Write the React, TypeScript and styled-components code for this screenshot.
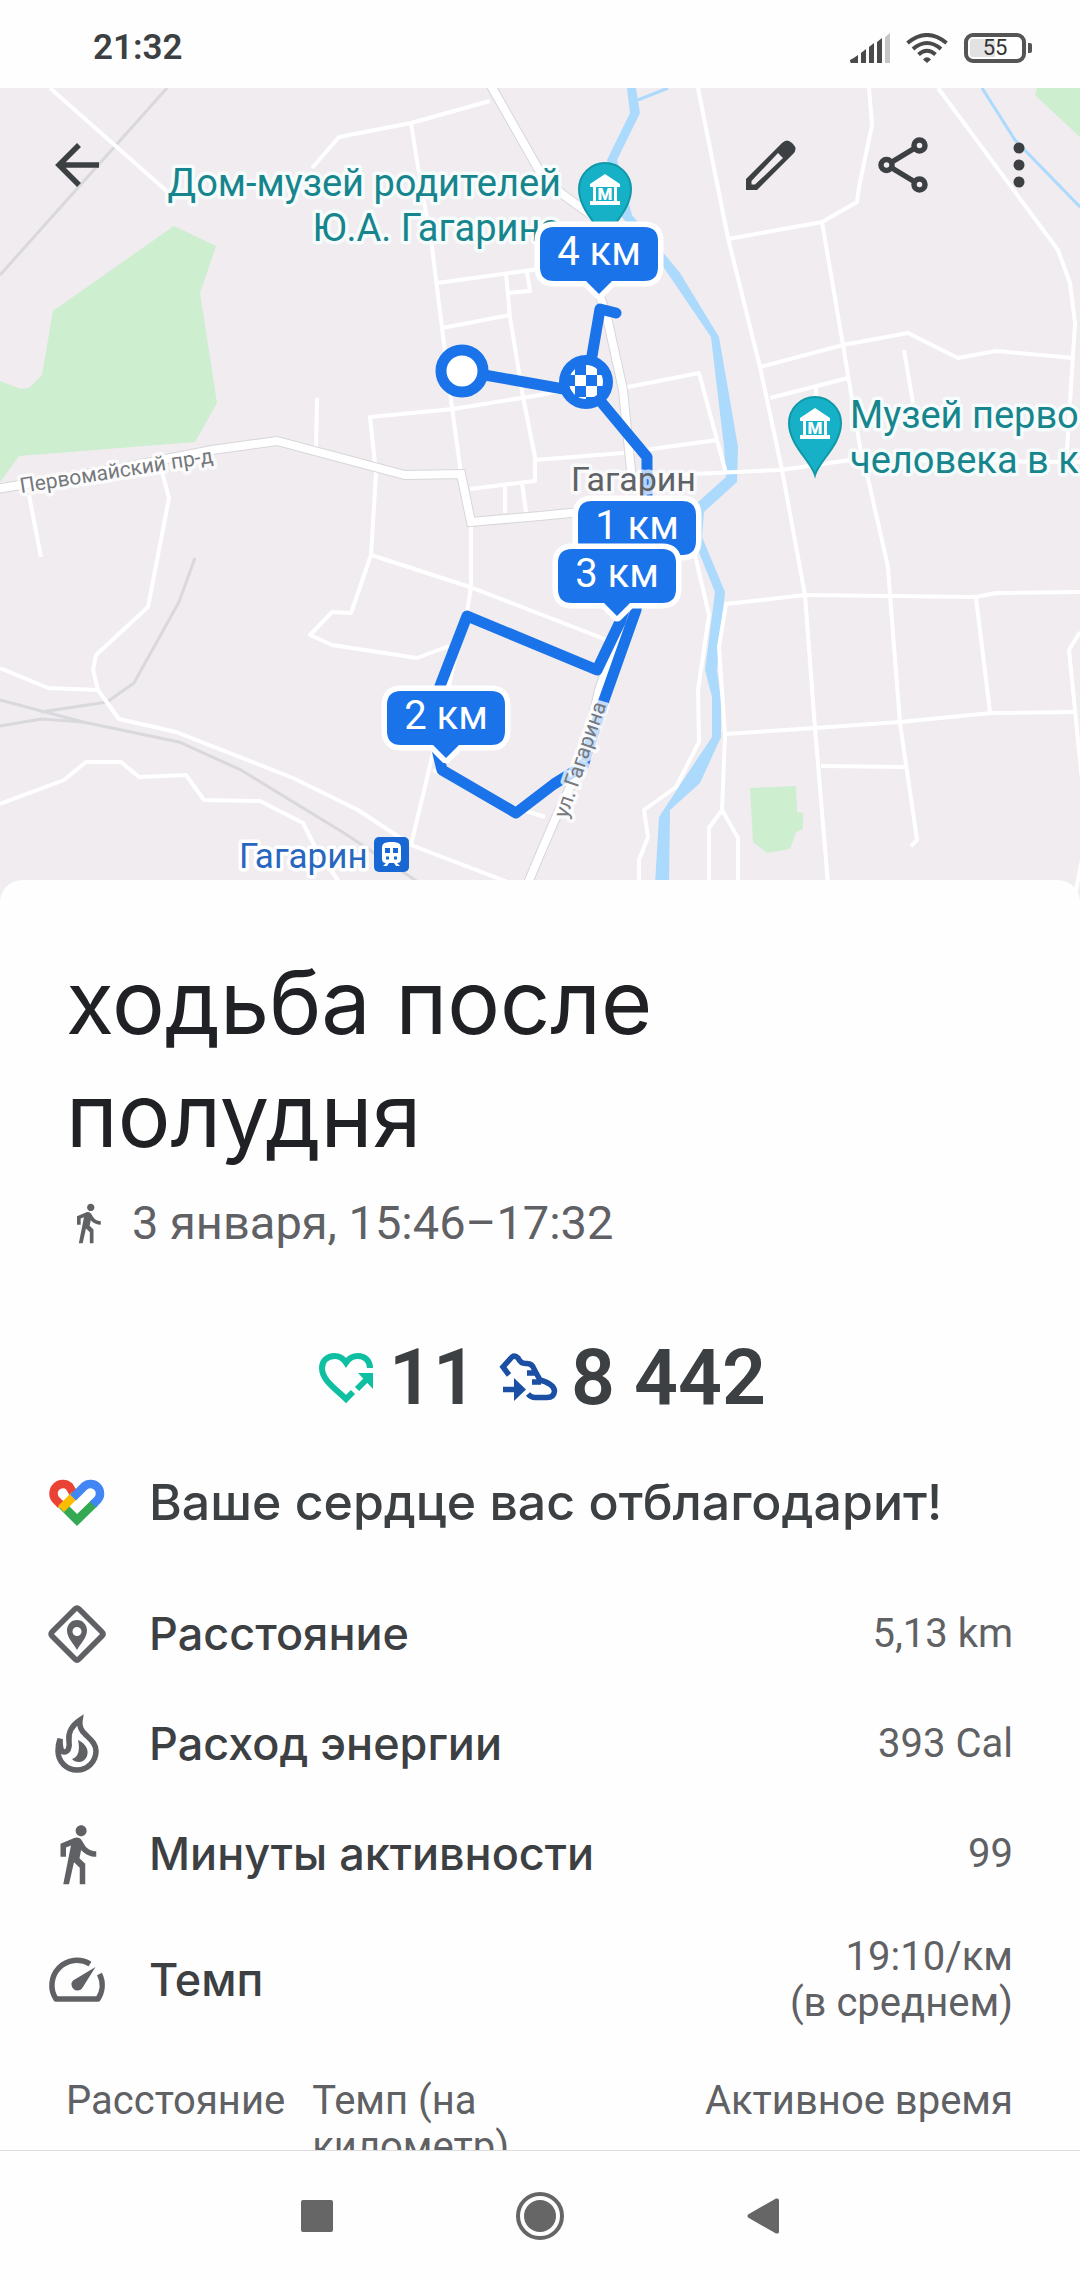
import React from "react";
import styled, { createGlobalStyle, css } from "styled-components";

const GlobalStyle = createGlobalStyle`
  *, *::before, *::after { box-sizing: border-box; }
  body { margin: 0; background: #fefefe; font-family: Roboto, "Noto Sans", sans-serif; }
`;

const display = css`
  font-family: Inter, "Noto Sans", sans-serif;
`;

const Screen = styled.div`
  display: flex;
  flex-direction: column;
  height: 100vh;
  background: #fefefe;
  color: #3c4043;
`;

/* ---------- status bar ---------- */

const StatusBar = styled.header`
  flex: none;
  display: flex;
  align-items: center;
  justify-content: space-between;
  height: 88px;
  padding: 8px 48px 0 93px;
`;

const Clock = styled.time`
  font-size: 35px;
  line-height: 40px;
  font-weight: 600;
`;

const StatusIcons = styled.div`
  display: flex;
  align-items: center;
  gap: 16px;
  color: #4a4a4a;
`;

const Battery = styled.span`
  position: relative;
  display: flex;
  align-items: center;
  justify-content: center;
  width: 62px;
  height: 30px;
  margin-right: 6px;
  border: 4px solid #555;
  border-radius: 9px;
  background: linear-gradient(90deg, #e2e2e2 50%, #fefefe 50%);
  box-shadow: inset 0 0 0 2px #fefefe;
  font-size: 22px;
  line-height: 22px;
  color: #333;

  &::after {
    content: "";
    position: absolute;
    right: -10px;
    top: 6px;
    width: 4px;
    height: 10px;
    border-radius: 0 2px 2px 0;
    background: #555;
  }
`;

/* ---------- map ---------- */

const Content = styled.main`
  flex: 1;
  min-height: 0;
  overflow-y: auto;
  scrollbar-width: none;
`;

const MapArea = styled.section`
  position: relative;
  height: 820px;
  background: #f0ecf0;
`;

const MapCanvas = styled.svg`
  display: block;
  width: 100%;
  height: 100%;
`;

const Toolbar = styled.div`
  position: absolute;
  inset: 0 0 auto 0;
  display: flex;
  align-items: center;
  height: 154px;
  padding: 0 28px 0 44px;
`;

const IconButton = styled.button<{ $end?: number }>`
  display: flex;
  align-items: center;
  justify-content: center;
  width: 66px;
  height: 66px;
  margin-right: ${(p) => p.$end ?? 0}px;
  padding: 0;
  border: 0;
  background: none;
  color: #3c4043;
`;

const Spacer = styled.span`
  flex: 1;
`;

/* ---------- details ---------- */

const Sheet = styled.section`
  position: relative;
  margin-top: -28px;
  padding: 66px 67px 0 66px;
  border-radius: 22px 22px 0 0;
  background: #fefefe;
`;

const Title = styled.h1`
  ${display}
  max-width: 700px;
  margin: 0;
  font-size: 88px;
  line-height: 113px;
  font-weight: 400;
  color: #202124;
`;

const When = styled.p`
  display: flex;
  align-items: center;
  gap: 22px;
  margin: 21px 0 0;
  font-size: 47px;
  line-height: 60px;
  color: #5f6164;
`;

const Totals = styled.div`
  display: flex;
  align-items: center;
  justify-content: center;
  gap: 21px;
  margin-top: 78px;
  padding-left: 5px;
`;

const Total = styled.span`
  display: flex;
  align-items: center;
  gap: 13px;
  font-size: 77px;
  line-height: 94px;
  font-weight: 600;
`;

const Facts = styled.ul`
  margin: 0 0 27px -22px;
  padding: 0;
  list-style: none;
`;

const Fact = styled.li<{ $tall?: number }>`
  display: flex;
  align-items: center;
  gap: 39px;
  height: ${(p) => p.$tall ?? 110}px;
`;

const FactName = styled.span<{ $lead?: boolean }>`
  ${display}
  flex: 1;
  font-size: ${(p) => (p.$lead ? 50 : 45)}px;
  line-height: 60px;
  font-weight: 500;
`;

const FactValue = styled.span`
  font-size: 40px;
  line-height: 46px;
  text-align: right;
  white-space: pre-line;
  color: #5f6164;
`;

const Splits = styled.table`
  width: 100%;
  border-collapse: collapse;
  font-size: 40px;
  line-height: 46px;
  color: #5f6164;
`;

const SplitHead = styled.th<{ $w?: string; $right?: boolean }>`
  width: ${(p) => p.$w ?? "auto"};
  padding: 0;
  font-weight: 400;
  text-align: ${(p) => (p.$right ? "right" : "left")};
  vertical-align: top;
`;

const SplitLabel = styled.span`
  display: block;
  max-width: 220px;
`;

/* ---------- system navigation ---------- */

const NavBar = styled.nav`
  flex: none;
  display: flex;
  align-items: center;
  justify-content: center;
  gap: 157px;
  height: 130px;
  border-top: 1px solid #dedede;
`;

const NavButton = styled(IconButton)`
  color: #666;
`;

const halo = { paintOrder: "stroke", strokeLinejoin: "round" } as const;

const thinRoads = [
  "50,88 170,194",
  "490,101 411,123 339,137 312,168",
  "411,123 418,167 432,247 442,328 451,400 461,474",
  "437,283 540,269",
  "506,273 510,317 523,397 535,457 535,481 470,489",
  "527,272 530,291 508,293",
  "442,328 510,315",
  "376,473 370,417 453,409 540,395 575,388",
  "376,473 371,555 351,613 332,612 310,635 332,645 417,658 449,646",
  "317,398 316,450",
  "371,555 470,587 540,614 607,640",
  "471,523 471,587 467,612",
  "505,485 505,513",
  "522,483 526,512",
  "535,460 623,453 717,440",
  "29,495 41,557",
  "160,455 162,472 169,498 148,607 96,655 93,670 98,690 119,719 176,732 293,778 358,810 411,845 510,883",
  "0,668 48,688 98,690",
  "0,804 64,780 86,762 121,762 139,777 186,775 204,800 260,801 303,823 315,847 339,882",
  "455,660 433,753 411,845",
  "433,770 516,808 545,817",
  "698,88 728,238 760,367 782,470 805,595 815,728 828,884",
  "869,88 872,125 859,187 857,202 822,222 728,239",
  "822,222 843,345 860,447 869,483 888,567 890,595 900,723 917,840 911,846",
  "938,88 1058,250 1070,283 1075,323 1067,450 1066,462",
  "760,367 843,345 908,333 958,358 996,351 1073,358",
  "770,398 848,378",
  "816,386 816,398",
  "904,350 913,403",
  "623,388 699,373 717,440 726,473",
  "660,476 691,474 781,470 850,460 1080,462",
  "805,595 976,597 996,593 1080,592",
  "805,595 726,604 719,647 725,735 722,810 709,828 709,884",
  "722,810 738,838 738,884",
  "690,535 695,555 709,615 698,690 699,742 676,787 644,810 648,837 639,860 639,884",
  "726,734 815,728 900,722 991,713 1076,712",
  "976,598 990,712",
  "821,766 905,767",
  "1080,632 1069,650 1076,720 1082,780",
  "1082,860 1076,890 1078,920",
];

const wideRoads = [
  "-4,489 110,470 212,450 277,441 405,475 461,474 471,522 540,516 590,511",
  "490,84 540,172 562,194 590,214",
  "598,290 607,317 623,390 632,480",
  "525,890 541,852 557,815 583,760 599,690 620,630",
];

const rails = [
  "167,88 0,275",
  "195,558 179,602 134,683 107,702 41,712",
  "0,700 83,722 179,742 241,770 344,833 418,882",
  "0,726 41,719 83,722",
];

const Pin = ({ x, y }: { x: number; y: number }) => (
  <g transform={`translate(${x} ${y})`}>
    <path
      d="M0 52C-4 38-26 22-26 0A26 26 0 0 1 26 0C26 22 4 38 0 52Z"
      fill="#16b1c6"
      stroke="#0f98a8"
      strokeWidth="2"
    />
    <path d="M-15-5 0-15 15-5V-2H-15ZM-12-2h3V12h-3ZM9-2h3V12H9ZM-15 12H15v4H-15Z" fill="#fff" />
    <text x="0" y="11" textAnchor="middle" fontSize="17" fontWeight="900" fill="#fff">
      М
    </text>
  </g>
);

const Marker = ({ x, y, label }: { x: number; y: number; label: string }) => (
  <g transform={`translate(${x} ${y})`}>
    <path
      d="M-45 0H45Q59 0 59 14V40Q59 54 45 54H13L0 67-13 54H-45Q-59 54-59 40V14Q-59 0-45 0Z"
      fill="#1a73e8"
      stroke="#fff"
      strokeWidth="11"
      strokeLinejoin="round"
      paintOrder="stroke"
    />
    <text x="0" y="38" textAnchor="middle" fontSize="40" fill="#fff">
      {label}
    </text>
  </g>
);

const RouteMap = () => (
  <MapCanvas
    viewBox="0 88 1080 820"
    preserveAspectRatio="xMidYMid slice"
    role="img"
    aria-label="Карта маршрута"
  >
    <g fill="#cdeecf">
      <path d="M174 226 216 246 200 293 217 403 195 442 19 456 0 482V381L21 389 29 388 42 375 53 311Z" />
      <path d="M1037 88H1080V137L1035 95Z" />
      <path d="M750 788 796 786 797 812 803 813V829L796 832 790 849 767 853 753 842Z" />
    </g>
    <g fill="none" stroke="#d9d8dc" strokeWidth="3">
      {rails.map((p) => (
        <polyline key={p} points={p} />
      ))}
    </g>
    <path
      d="M627 88H636L640 113 617 160 632 215 680 273 719 337 738 447 737 482 704 512 702 537 725 592 717 670 721 700V737L700 783 670 810 669 884H655L659 817 688 773 712 737V697L705 670 715 592 692 535 697 503 726 477 724 447 711 337 660 262 620 215 607 160 630 113Z"
      fill="#acdafd"
    />
    <g fill="none" stroke="#acdafd" strokeWidth="3">
      <path d="M638 100 668 88" />
      <path d="M982 88 1015 140 1080 207" />
    </g>
    <g fill="none" stroke="#fff" strokeWidth="4" strokeLinejoin="round">
      {thinRoads.map((p) => (
        <polyline key={p} points={p} />
      ))}
    </g>
    <g fill="none" stroke="#d8d6da" strokeWidth="10">
      {wideRoads.map((p) => (
        <polyline key={p} points={p} />
      ))}
    </g>
    <g fill="none" stroke="#fff" strokeWidth="8">
      {wideRoads.map((p) => (
        <polyline key={p} points={p} />
      ))}
    </g>

    <g fill="none" stroke="#1a73e8" strokeWidth="11" strokeLinejoin="round" strokeLinecap="round">
      <path d="M462 371 586 393" />
      <path d="M616 313 600 309 587 385 647 457V500L636 610 603 703 583 766 554 784 516 813 442 770 436 745 440 686 467 616 597 670 620 622 640 560" />
    </g>
    <circle cx="462" cy="371" r="21" fill="#fff" stroke="#1a73e8" strokeWidth="11" />
    <circle cx="586" cy="382" r="27" fill="#1a73e8" />
    <clipPath id="finish">
      <circle cx="586" cy="382" r="17" />
    </clipPath>
    <path
      d="M564 364H575V375H564ZM586 364H597V375H586ZM575 375H586V386H575ZM597 375H608V386H597ZM564 386H575V397H564ZM586 386H597V397H586ZM575 397H586V408H575Z"
      fill="#fff"
      clipPath="url(#finish)"
    />

    <g fontSize="38" fill="#17858d" stroke="#f6fbfb" strokeWidth="7" style={halo}>
      <text x="561" y="196" textAnchor="end">Дом-музей родителей</text>
      <text x="561" y="241" textAnchor="end">Ю.А. Гагарина</text>
      <text x="850" y="428">Музей перво</text>
      <text x="850" y="473">человека в к</text>
    </g>
    <text x="571" y="491" fontSize="34" fill="#5f6266" stroke="#fff" strokeOpacity="0.7" strokeWidth="7" style={halo}>
      Гагарин
    </text>
    <text x="239" y="868" fontSize="35" fill="#2767c0" stroke="#fff" strokeWidth="7" style={halo}>
      Гагарин
    </text>
    <g fontSize="21" fill="#75787c" stroke="#fff" strokeOpacity="0.75" strokeWidth="7" style={halo}>
      <text transform="translate(21 493) rotate(-9)">Первомайский пр-д</text>
      <text transform="translate(567 819) rotate(-71)">ул. Гагарина</text>
    </g>

    <rect x="374" y="837" width="35" height="35" rx="5" fill="#1967d2" />
    <path
      d="M391.500 842C384 842 382 844 382 848V859Q382 863 386 863L383 866H387L389 863H394L396 866H400L397 863Q401 863 401 859V848C401 844 399 842 391.500 842ZM385 848H390V853H385ZM393 848H398V853H393ZM386 856.500H389V859.500H386ZM394 856.500H397V859.500H394Z"
      fill="#fff"
      fillRule="evenodd"
    />

    <Pin x={605} y={189} />
    <Pin x={815} y={423} />
    <Marker x={599} y={227} label="4 км" />
    <Marker x={637} y={501} label="1 км" />
    <Marker x={617} y={549} label="3 км" />
    <Marker x={446} y={691} label="2 км" />
  </MapCanvas>
);

const WalkIcon = ({ size }: { size: number }) => (
  <svg width={size} height={size} viewBox="0 0 24 24" fill="#5f6164" aria-hidden="true">
    <path d="M13.5 5.500c1.100 0 2-.9 2-2s-.9-2-2-2-2 .9-2 2 .9 2 2 2zM9.800 8.900L7 23h2.100l1.800-8 2.100 2v6h2v-7.500l-2.100-2 .6-3C14.800 12 16.800 13 19 13v-2c-1.900 0-3.500-1-4.300-2.400l-1-1.600c-.4-.6-1-1-1.700-1-.3 0-.5.1-.8.1L6 8.300V13h2V9.600l1.800-.7" />
  </svg>
);

const FitIcon = () => (
  <svg width="66" height="66" viewBox="0 0 66 66" fill="none" strokeWidth="8.500" aria-hidden="true">
    <path d="M50.500 34 33 51 18 36" stroke="#34a853" />
    <path d="M31 27 25.200 17.300A9.500 9.500 0 0 0 11.800 30.700L17 36" stroke="#ea4335" />
    <path d="M17 40 31 26" stroke="#fbbc04" />
    <path d="M29 28.500 40.300 17.300A9.500 9.500 0 0 1 53.700 30.700L49 35.500" stroke="#4285f4" />
  </svg>
);

const DistanceIcon = () => (
  <svg width="66" height="66" viewBox="0 0 66 66" aria-hidden="true">
    <path
      d="M31 8Q33 6 35 8L58 31Q60 33 58 35L35 58Q33 60 31 58L8 35Q6 33 8 31Z"
      fill="none"
      stroke="#5f6164"
      strokeWidth="5.500"
    />
    <path
      d="M33 19C27 19 23 24 23 29.500 23 37 30 43 33 49 36 43 43 37 43 29.500 43 24 39 19 33 19ZM33 26A4.500 4.500 0 1 1 33 35 4.500 4.500 0 0 1 33 26Z"
      fill="#5f6164"
      fillRule="evenodd"
    />
  </svg>
);

const FlameIcon = () => (
  <svg width="66" height="66" viewBox="0 0 66 66" aria-hidden="true">
    <path
      d="M16 28C14 33 14 37 14 40A19 19 0 0 0 52 40C52 33 47 29 42 24 37 20 35 15 36 9 27 15 24 22 25 30 26 37 24 41 20 41 17 41 16 36 16 28Z"
      fill="none"
      stroke="#5f6164"
      strokeWidth="5.500"
    />
    <path d="M34 29C42 33 45 39 43 45 40 53 31 52 28 48 35 46 36 38 34 29Z" fill="#5f6164" />
  </svg>
);

const PaceIcon = () => (
  <svg width="66" height="66" viewBox="0 0 66 66" aria-hidden="true">
    <path
      d="M46 17A25 25 0 0 0 12 52H54A25 25 0 0 0 55.500 27"
      fill="none"
      stroke="#5f6164"
      strokeWidth="5.500"
      strokeLinejoin="round"
    />
    <path d="M51.500 20 38 41.500A6 6 0 1 1 29 33.500Z" fill="#5f6164" />
  </svg>
);

const HeartPointsIcon = () => (
  <svg width="58" height="56" viewBox="0 0 58 56" fill="none" stroke="#0fbfa2" strokeWidth="6" aria-hidden="true">
    <path d="M52 18C52 10 46 6 40 6 35 6 31 8 28 12.500 25 8 21 6 16.500 6 9 6 4 11 4 18 4 29 14 36 28 49L35 42" />
    <path d="M39 39 48 30" />
    <path d="M40 23H55V39Z" fill="#0fbfa2" stroke="none" />
  </svg>
);

const StepsIcon = () => (
  <svg width="60" height="54" viewBox="0 0 60 54" fill="none" stroke="#1a4fa3" strokeWidth="5.500" aria-hidden="true">
    <path d="M11 24 5 16 14 6Q17 4 20 7 23 13 28 12.500 34 12 36 18L42 29Q56 33 56.500 40 56 46.500 49 46.500H37Q33 46.500 30 43" />
    <path d="M29 22H38M34 31H43M5 38.500H17" />
    <path d="M16 27 28 38.500 16 50Z" fill="#1a4fa3" stroke="none" />
  </svg>
);

export default function App() {
  return (
    <Screen>
      <GlobalStyle />
      <StatusBar>
        <Clock>21:32</Clock>
        <StatusIcons>
          <svg width="40" height="30" viewBox="0 0 40 30" fill="#4a4a4a" aria-hidden="true">
            <path d="M0 27Q4 25 8 22V30H1Q0 30 0 27ZM11 20 16 16V30H11ZM19 14 24 10V30H19ZM27 9 32 5V30H27Z" />
            <path d="M35 4 40 0V30H35Z" fill="#c6c6c6" />
          </svg>
          <svg width="42" height="30" viewBox="0 0 42 30" fill="none" stroke="#4a4a4a" strokeWidth="4" aria-hidden="true">
            <path d="M1.500 10Q21-6 40.500 10M7 16Q21 4 35 16M12.500 21.500Q21 14 29.500 21.500" />
            <path d="M21 30 17 26.500Q21 22 25 26.500Z" fill="#4a4a4a" stroke="none" />
          </svg>
          <Battery>55</Battery>
        </StatusIcons>
      </StatusBar>

      <Content>
        <MapArea>
          <RouteMap />
          <Toolbar>
            <IconButton aria-label="Назад">
              <svg width="44" height="44" viewBox="0 0 44 44" fill="none" stroke="currentColor" strokeWidth="5.500">
                <path d="M44 22H4M24 2 4 22 24 42" />
              </svg>
            </IconButton>
            <Spacer />
            <IconButton aria-label="Изменить" $end={66}>
              <svg width="50" height="50" viewBox="0 0 50 50">
                <path
                  d="M0 50V39L36 3Q41-2 46 3L47 4Q52 9 47 14L11 50ZM5.500 44.500H9L37 18 32 13 5.500 41Z"
                  fill="currentColor"
                  fillRule="evenodd"
                />
              </svg>
            </IconButton>
            <IconButton aria-label="Поделиться" $end={50}>
              <svg width="50" height="56" viewBox="0 0 50 56" fill="none" stroke="currentColor" strokeWidth="5.500">
                <circle cx="8.500" cy="28" r="5.500" />
                <circle cx="41.500" cy="8.500" r="5.500" />
                <circle cx="41.500" cy="47.500" r="5.500" />
                <path d="M13 25.500 37 11M13 30.500 37 45" />
              </svg>
            </IconButton>
            <IconButton aria-label="Ещё">
              <svg width="12" height="46" viewBox="0 0 12 46" fill="currentColor">
                <circle cx="6" cy="6" r="5.500" />
                <circle cx="6" cy="23" r="5.500" />
                <circle cx="6" cy="40" r="5.500" />
              </svg>
            </IconButton>
          </Toolbar>
        </MapArea>

        <Sheet>
          <Title>ходьба после полудня</Title>
          <When>
            <WalkIcon size={44} />
            3 января, 15:46–17:32
          </When>
          <Totals>
            <Total>
              <HeartPointsIcon />
              11
            </Total>
            <Total>
              <StepsIcon />8 442
            </Total>
          </Totals>
          <Facts>
            <Fact $tall={154}>
              <FitIcon />
              <FactName $lead>Ваше сердце вас отблагодарит!</FactName>
            </Fact>
            <Fact>
              <DistanceIcon />
              <FactName>Расстояние</FactName>
              <FactValue>5,13 km</FactValue>
            </Fact>
            <Fact>
              <FlameIcon />
              <FactName>Расход энергии</FactName>
              <FactValue>393 Cal</FactValue>
            </Fact>
            <Fact>
              <WalkIcon size={66} />
              <FactName>Минуты активности</FactName>
              <FactValue>99</FactValue>
            </Fact>
            <Fact $tall={142}>
              <PaceIcon />
              <FactName>Темп</FactName>
              <FactValue>{"19:10/км\n(в среднем)"}</FactValue>
            </Fact>
          </Facts>
          <Splits>
            <thead>
              <tr>
                <SplitHead scope="col" $w="26%">Расстояние</SplitHead>
                <SplitHead scope="col">
                  <SplitLabel>Темп (на километр)</SplitLabel>
                </SplitHead>
                <SplitHead scope="col" $right>Активное время</SplitHead>
              </tr>
            </thead>
          </Splits>
        </Sheet>
      </Content>

      <NavBar>
        <NavButton aria-label="Недавние приложения">
          <svg width="32" height="32" viewBox="0 0 32 32" fill="currentColor">
            <rect width="32" height="32" rx="2" />
          </svg>
        </NavButton>
        <NavButton aria-label="Главный экран">
          <svg width="48" height="48" viewBox="0 0 48 48">
            <circle cx="24" cy="24" r="22" fill="none" stroke="currentColor" strokeWidth="4" />
            <circle cx="24" cy="24" r="16" fill="currentColor" />
          </svg>
        </NavButton>
        <NavButton aria-label="Назад">
          <svg width="32" height="36" viewBox="0 0 32 36" fill="currentColor">
            <path d="M1 16.500Q0 18 1 19.500L29 35.500Q32 36 32 34V2Q32 0 29 .5Z" />
          </svg>
        </NavButton>
      </NavBar>
    </Screen>
  );
}
